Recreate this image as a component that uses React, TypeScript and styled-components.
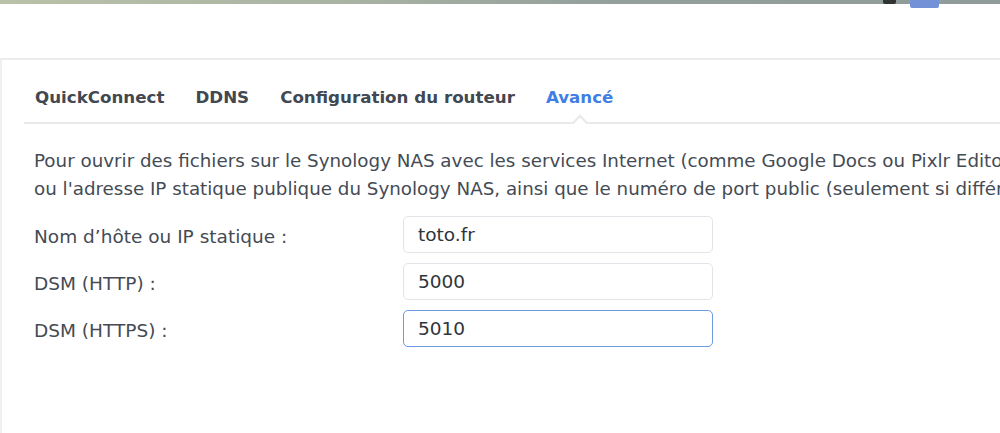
import React from 'react';
import styled, {createGlobalStyle} from 'styled-components';

const GlobalStyle = createGlobalStyle`
  html, body {
    margin: 0;
    padding: 0;
    background: #ffffff;
    overflow: hidden;
  }
  body {
    font-family: 'DejaVu Sans', Verdana, sans-serif;
    color: #444b54;
  }
`;

const Page = styled.div`
  width: 1000px;
  height: 433px;
  display: flex;
  flex-direction: column;
  overflow: hidden;
`;

// strip of the desktop wallpaper peeking above the window
const Wallpaper = styled.div`
  height: 4px;
  flex-shrink: 0;
  display: flex;
  justify-content: flex-end;
  align-items: flex-start;
  gap: 14px;
  padding-right: 61px;
  background: linear-gradient(90deg, #b9c1a9 0%, #a9b3a3 35%, #93a09c 60%, #8e9b98 100%);
`;

const DockItem = styled.span<{$w: number; $h: number; $color: string}>`
  width: ${(p) => p.$w}px;
  height: ${(p) => p.$h}px;
  background: ${(p) => p.$color};
  border-radius: 0 0 2px 2px;
`;

const Panel = styled.section`
  margin-top: 54px;
  flex: 1;
  border-top: 2px solid #ececec;
  border-left: 2px solid #efefef;
  padding: 0 0 0 22px;
`;

const TabBar = styled.nav`
  display: flex;
  align-items: center;
  gap: 9px;
  height: 62px;
  border-bottom: 2px solid #e9e9e9;
`;

const Tab = styled.div<{$active?: boolean}>`
  position: relative;
  box-sizing: border-box;
  height: 100%;
  display: flex;
  align-items: center;
  padding: 12px 11px 0;
  font-size: 16.7px;
  font-weight: bold;
  color: ${(p) => (p.$active ? '#3f7fe4' : '#414851')};
  white-space: nowrap;

  ${(p) =>
    p.$active &&
    `
    &::after {
      content: '';
      position: absolute;
      left: 50%;
      bottom: -7px;
      width: 10px;
      height: 10px;
      background: #ffffff;
      border-top: 2px solid #e9e9e9;
      border-left: 2px solid #e9e9e9;
      transform: translateX(-50%) rotate(45deg);
    }
  `}
`;

const Body = styled.div`
  padding: 23px 0 0 10px;
`;

const Intro = styled.p`
  margin: 0 0 13px;
  font-size: 18.3px;
  line-height: 28px;
  white-space: nowrap;
`;

const Line = styled.span`
  display: block;
`;

const Form = styled.div`
  display: grid;
  grid-template-columns: 369px 310px;
  row-gap: 10px;
  align-items: center;
`;

const Label = styled.label`
  padding-top: 3px;
  font-size: 18.5px;
  color: #444b54;
  white-space: nowrap;
`;

const Input = styled.input<{$focused?: boolean}>`
  box-sizing: border-box;
  height: 37px;
  width: 100%;
  padding: 0 14px;
  font-family: 'DejaVu Sans', Verdana, sans-serif;
  font-size: 18.5px;
  color: #2f353c;
  background: #ffffff;
  border: 1px solid ${(p) => (p.$focused ? '#6e9be3' : '#e1e4e8')};
  border-radius: 5px;
  outline: none;
`;

const fields = [
  {label: 'Nom d’hôte ou IP statique :', value: 'toto.fr'},
  {label: 'DSM (HTTP) :', value: '5000'},
  {label: 'DSM (HTTPS) :', value: '5010', focused: true}
];

const App = () => {
  return (
    <Page>
      <GlobalStyle />
      <Wallpaper>
        <DockItem $w={13} $h={4} $color="#2f3432" />
        <DockItem $w={29} $h={8} $color="#7391d6" />
      </Wallpaper>
      <Panel>
        <TabBar>
          <Tab>QuickConnect</Tab>
          <Tab>DDNS</Tab>
          <Tab>Configuration du routeur</Tab>
          <Tab $active>Avancé</Tab>
        </TabBar>
        <Body>
          <Intro>
            <Line>
              Pour ouvrir des fichiers sur le Synology NAS avec les services Internet (comme Google Docs ou Pixlr Editor),
            </Line>
            <Line>
              ou l'adresse IP statique publique du Synology NAS, ainsi que le numéro de port public (seulement si différent).
            </Line>
          </Intro>
          <Form>
            {fields.map((f) => (
              <React.Fragment key={f.label}>
                <Label>{f.label}</Label>
                <Input defaultValue={f.value} $focused={f.focused} readOnly />
              </React.Fragment>
            ))}
          </Form>
        </Body>
      </Panel>
    </Page>
  );
};

export default App;
